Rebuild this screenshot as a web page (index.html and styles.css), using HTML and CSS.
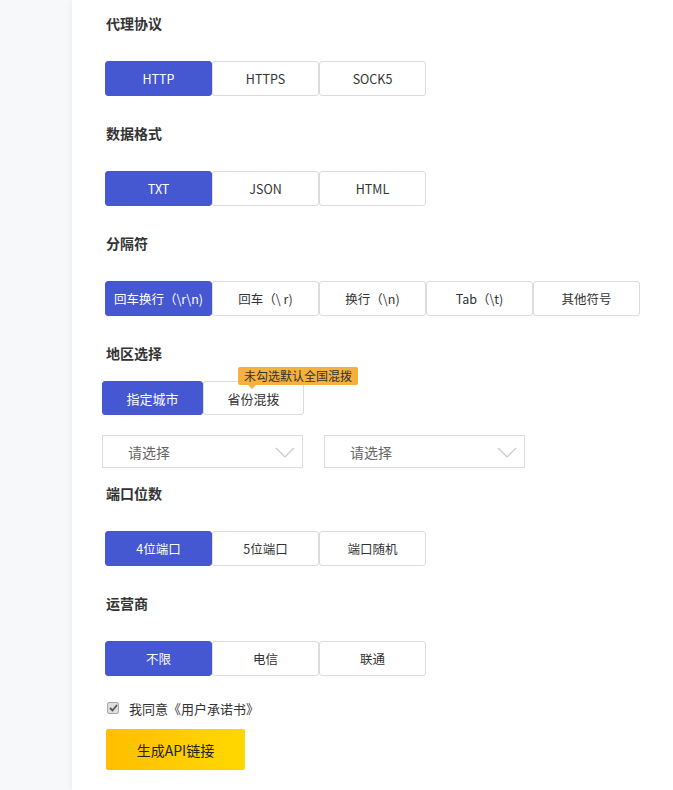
FILE: index.html
```html
<!DOCTYPE html>
<html lang="zh">
<head>
<meta charset="utf-8">
<title>API</title>
<link rel="stylesheet" href="styles.css">
</head>
<body>
<div class="layout">
  <aside class="side"></aside>
  <main class="main">
    <section class="sec">
      <h3 class="title">代理协议</h3>
      <div class="group">
        <span class="opt on">HTTP</span><span class="opt">HTTPS</span><span class="opt">SOCK5</span>
      </div>
    </section>
    <section class="sec">
      <h3 class="title">数据格式</h3>
      <div class="group">
        <span class="opt on">TXT</span><span class="opt">JSON</span><span class="opt">HTML</span>
      </div>
    </section>
    <section class="sec">
      <h3 class="title">分隔符</h3>
      <div class="group">
        <span class="opt on">回车换行（\r\n)</span><span class="opt">回车（\ r)</span><span class="opt">换行（\n)</span><span class="opt">Tab（\t)</span><span class="opt">其他符号</span>
      </div>
    </section>
    <section class="sec region">
      <h3 class="title">地区选择</h3>
      <div class="group narrow">
        <span class="opt on">指定城市</span><span class="opt tip-wrap">省份混拨<span class="tip">未勾选默认全国混拨</span></span>
      </div>
      <div class="selects">
        <div class="select">请选择<svg class="chev" width="20" height="11" viewBox="0 0 20 11"><path d="M1 1 L10 10 L19 1" fill="none" stroke="#c8c8c8" stroke-width="1.2"/></svg></div>
        <div class="select">请选择<svg class="chev" width="20" height="11" viewBox="0 0 20 11"><path d="M1 1 L10 10 L19 1" fill="none" stroke="#c8c8c8" stroke-width="1.2"/></svg></div>
      </div>
    </section>
    <section class="sec">
      <h3 class="title">端口位数</h3>
      <div class="group">
        <span class="opt on">4位端口</span><span class="opt">5位端口</span><span class="opt">端口随机</span>
      </div>
    </section>
    <section class="sec last">
      <h3 class="title">运营商</h3>
      <div class="group">
        <span class="opt on">不限</span><span class="opt">电信</span><span class="opt">联通</span>
      </div>
    </section>
    <label class="agree"><span class="check"><svg width="9" height="8" viewBox="0 0 9 8"><path d="M1 4 L3.5 6.5 L8 1" fill="none" stroke="#555" stroke-width="1.8"/></svg></span>我同意《用户承诺书》</label>
    <button class="gen">生成API链接</button>
  </main>
</div>
</body>
</html>
```
FILE: styles.css
```css
* { box-sizing: border-box; }
html, body { margin: 0; padding: 0; }
body {
  font-family: "Noto Sans CJK SC", "Noto Sans", sans-serif;
  color: #333;
  background: #fff;
}
.layout { display: flex; min-height: 790px; }
.side {
  width: 72px;
  flex: none;
  background: #f7f8fa;
}
.main {
  flex: 1;
  background: #fff;
  box-shadow: -2px 0 4px rgba(0,0,0,0.04);
  padding: 13px 0 0 33px;
}
.sec { margin-bottom: 27px; }
.sec.last { margin-bottom: 24px; }
.title {
  margin: 0 0 28px 1px;
  font-size: 14px;
  line-height: 20px;
  font-weight: bold;
  color: #333;
}
.group { display: flex; }
.opt {
  width: 107px;
  height: 35px;
  display: flex;
  align-items: center;
  justify-content: center;
  border: 1px solid #dcdcdc;
  border-radius: 3px;
  font-size: 12.5px;
  color: #333;
  background: #fff;
  white-space: nowrap;
}
.opt.on {
  background: #4557d1;
  border-color: #4557d1;
  color: #fff;
}
.region .title { margin-bottom: 18px; }
.group.narrow { margin-left: -3px; }
.narrow .opt { width: 101px; height: 34px; font-size: 13px; }
.tip-wrap { position: relative; }
.tip {
  position: absolute;
  left: 34px;
  top: -15px;
  height: 18px;
  padding: 0 6px;
  background: #f6b03e;
  color: #333;
  font-size: 12px;
  line-height: 18px;
  border-radius: 2px;
  white-space: nowrap;
}
.tip::after {
  content: "";
  position: absolute;
  left: 10px;
  bottom: -4px;
  border-left: 4px solid transparent;
  border-right: 4px solid transparent;
  border-top: 4px solid #f6b03e;
}
.selects {
  display: flex;
  gap: 21px;
  margin: 20px 0 0 -3px;
}
.select {
  width: 201px;
  height: 33px;
  border: 1px solid #dcdcdc;
  display: flex;
  align-items: center;
  padding-left: 25px;
  font-size: 14px;
  color: #666;
  position: relative;
}
.chev { position: absolute; right: 7px; top: 11px; }
.region { margin-bottom: 15px; }
.agree {
  display: flex;
  align-items: center;
  font-size: 13px;
  color: #333;
  height: 16px;
  margin-left: 2px;
}
.check {
  width: 12px;
  height: 12px;
  border: 1px solid #a8a8a8;
  background: #dedede;
  border-radius: 2px;
  display: flex;
  align-items: center;
  justify-content: center;
  margin-right: 10px;
}
.gen {
  display: block;
  margin: 13px 0 0 1px;
  width: 139px;
  height: 41px;
  border: 0;
  border-radius: 2px;
  background: linear-gradient(90deg, #ffbe00, #ffd800);
  font-family: inherit;
  font-size: 14px;
  color: #222;
}
```
